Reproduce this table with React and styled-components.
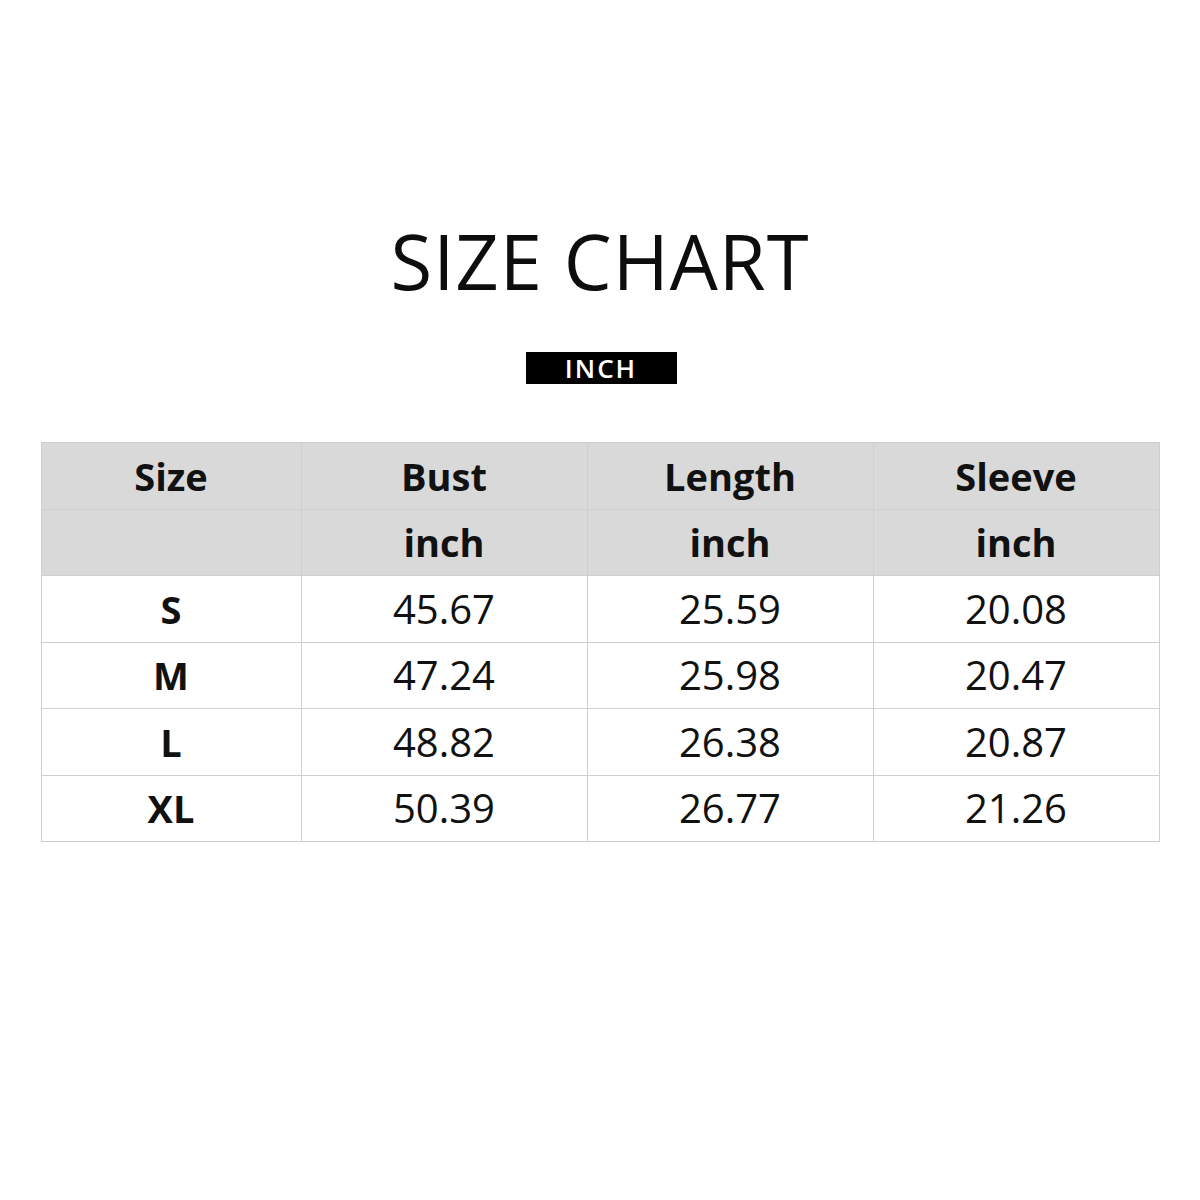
import styled, { createGlobalStyle } from "styled-components"

const GlobalStyle = createGlobalStyle`
  body {
    margin: 0;
    background: #ffffff;
    font-family: "Open Sans", "Noto Sans", sans-serif;
    color: #111111;
  }
`

const Page = styled.div`
  width: 1200px;
  height: 1200px;
  display: flex;
  flex-direction: column;
  align-items: center;
  padding-top: 223px;
  box-sizing: border-box;
`

const Title = styled.h1`
  margin: 0;
  font-size: 76px;
  font-weight: 400;
  line-height: 1;
  letter-spacing: 1px;
  color: #0d0d0d;
`

const Unit = styled.div`
  margin-top: 53px;
  margin-left: 2px;
  width: 151px;
  height: 32px;
  background: #000000;
  color: #ffffff;
  display: flex;
  align-items: center;
  justify-content: center;
  font-size: 26px;
  font-weight: 600;
  letter-spacing: 2px;
`

const Table = styled.table`
  margin-top: 58px;
  border-collapse: collapse;
  table-layout: fixed;
  width: 1119px;
`

const Row = styled.tr`
  height: 66.5px;
  background: ${(p) => (p.$head ? "#d9d9d9" : "#ffffff")};
`

const Cell = styled.td`
  border: 1px solid #cfcfcf;
  padding: 0;
  text-align: center;
  vertical-align: middle;
  font-size: ${(p) => (p.$bold ? "38px" : "40px")};
  font-weight: ${(p) => (p.$bold ? 700 : 400)};
  line-height: 1;
  color: #111111;
`

const columns = [
  { name: "Size", width: 260 },
  { name: "Bust", width: 286 },
  { name: "Length", width: 286 },
  { name: "Sleeve", width: 286 },
]

const rows = [
  ["S", "45.67", "25.59", "20.08"],
  ["M", "47.24", "25.98", "20.47"],
  ["L", "48.82", "26.38", "20.87"],
  ["XL", "50.39", "26.77", "21.26"],
]

const App = () => {
  return (
    <>
      <GlobalStyle />
      <Page>
        <Title>SIZE CHART</Title>
        <Unit>INCH</Unit>
        <Table>
          <colgroup>
            {columns.map((c) => (
              <col key={c.name} style={{ width: c.width }} />
            ))}
          </colgroup>
          <tbody>
            <Row $head>
              {columns.map((c) => (
                <Cell key={c.name} $bold>{c.name}</Cell>
              ))}
            </Row>
            <Row $head>
              <Cell />
              <Cell $bold>inch</Cell>
              <Cell $bold>inch</Cell>
              <Cell $bold>inch</Cell>
            </Row>
            {rows.map((r) => (
              <Row key={r[0]}>
                <Cell $bold>{r[0]}</Cell>
                <Cell>{r[1]}</Cell>
                <Cell>{r[2]}</Cell>
                <Cell>{r[3]}</Cell>
              </Row>
            ))}
          </tbody>
        </Table>
      </Page>
    </>
  )
}

export default App
